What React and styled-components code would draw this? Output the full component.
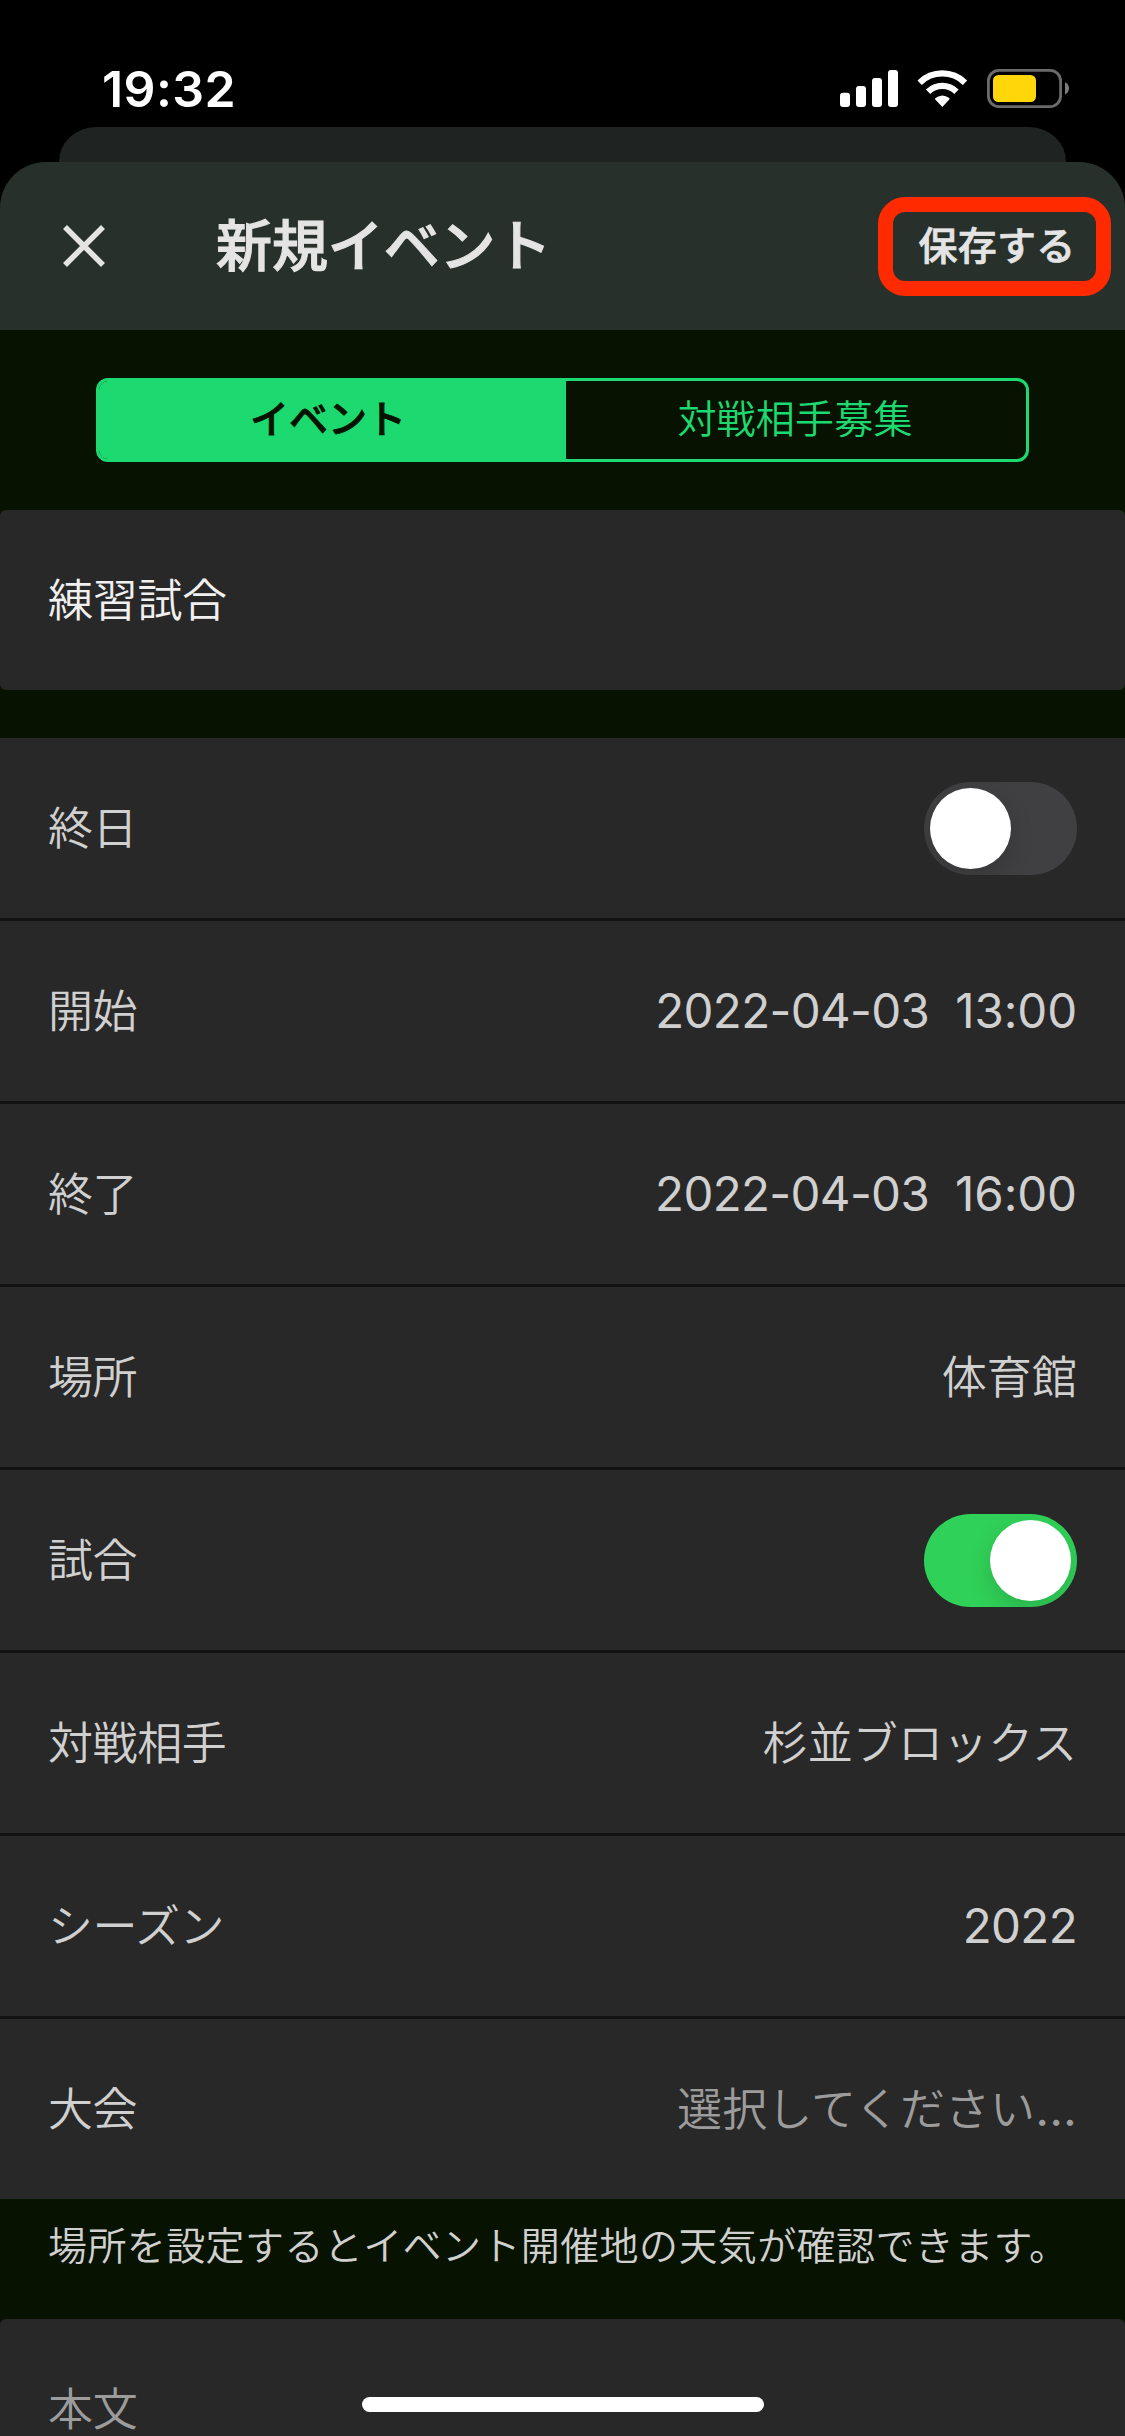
import React, { useState } from "react";
import styled, { createGlobalStyle } from "styled-components";

const GlobalStyle = createGlobalStyle`
  *, *::before, *::after { box-sizing: border-box; }
  body { margin: 0; background: #000; }
  button { font: inherit; border: 0; background: none; padding: 0; margin: 0; }
`;

const Screen = styled.div`
  width: 1125px;
  height: 2436px;
  overflow: hidden;
  position: relative;
  background: #000;
  color: #d0d0d0;
  font-family: Inter, "Noto Sans CJK JP", sans-serif;
  font-weight: 350;
  line-height: 1;
  white-space: nowrap;
  display: flex;
  flex-direction: column;
`;

const StatusBar = styled.div`
  height: 127px;
  flex: none;
  display: flex;
  justify-content: space-between;
  align-items: flex-start;
  padding: 64px 56px 0 102px;
`;

const Clock = styled.div`
  font-size: 50px;
  font-weight: 600;
  letter-spacing: 0.4px;
  color: #fff;
`;

const StatusIcons = styled.svg`
  width: 229px;
  height: 39px;
  margin-top: 5px;
`;

const BackSheet = styled.div`
  flex: none;
  height: 35px;
  margin: 0 59px;
  border-radius: 42px 42px 0 0 / 40px 40px 0 0;
  background: #1f2422;
`;

const Sheet = styled.div`
  flex: 1;
  display: flex;
  flex-direction: column;
  background: #071200;
  border-radius: 46px 46px 0 0;
  overflow: hidden;
`;

const Header = styled.header`
  height: 168px;
  flex: none;
  display: flex;
  align-items: center;
  background: #28302b;
  color: #e4e4e4;
  padding: 0 14px 0 63px;
`;

const CloseButton = styled.button`
  width: 42px;
  height: 42px;
  display: flex;
  color: inherit;
`;

const Title = styled.h1`
  margin: 0 auto 0 111px;
  font-size: 56px;
  font-weight: 500;
  -webkit-text-stroke: 1.1px currentColor;
  letter-spacing: -0.1px;
  line-height: 1;
`;

const SaveButton = styled.button`
  width: 233px;
  height: 99px;
  border: 15px solid #ff2a00;
  border-radius: 27px;
  color: inherit;
  font-size: 39px;
  font-weight: 500;
  -webkit-text-stroke: 0.7px currentColor;
  letter-spacing: 0.3px;
  line-height: 1;
  padding: 0 0 2px 5px;
`;

const Tabs = styled.div`
  flex: none;
  margin: 48px 96px;
  height: 84px;
  display: flex;
  border: 3px solid #1cda6f;
  border-radius: 12px;
  overflow: hidden;
`;

const Tab = styled.button`
  width: ${(p) => (p.$active ? "467px" : "460px")};
  padding: 0 ${(p) => (p.$active ? "9px" : "2px")} 3px 0;
  background: ${(p) => (p.$active ? "#1cda6f" : "transparent")};
  color: ${(p) => (p.$active ? "#071200" : "#1cda6f")};
  font-size: 39px;
  font-weight: ${(p) => (p.$active ? 500 : 350)};
  -webkit-text-stroke: ${(p) => (p.$active ? "0.8px" : "0")} currentColor;
  letter-spacing: ${(p) => (p.$active ? "0" : "0.2px")};
  line-height: 1;
`;

const Card = styled.div`
  flex: none;
  height: 180px;
  display: flex;
  align-items: center;
  padding: 0 48px;
  border-radius: 6px;
  background: #282828;
  font-size: 45px;
  letter-spacing: -0.3px;
  color: ${(p) => (p.$placeholder ? "#9c9c9c" : "#f0f0f0")};
`;

const Section = styled.div`
  flex: none;
  margin-top: 48px;
  display: flex;
  flex-direction: column;
  gap: 3px;
  background: #121212;
`;

const Row = styled.div`
  height: 180px;
  display: flex;
  align-items: center;
  justify-content: space-between;
  padding: 0 48px;
  background: #282828;
  font-size: 45px;
  letter-spacing: -0.4px;
`;

const Value = styled.span`
  letter-spacing: 0.1px;
  color: ${(p) => (p.$placeholder ? "#9c9c9c" : "inherit")};
`;

const Ellipsis = styled.span`
  font-size: 48px;
  font-weight: 400;
  line-height: 0;
`;

const NumericValue = styled.span`
  display: flex;
  gap: 26px;
  font-size: 47.5px;
  font-weight: 400;
`;

const Digits = styled.span`
  letter-spacing: ${(p) => p.$tracking}px;
`;

const Track = styled.button`
  width: 153px;
  height: 93px;
  border-radius: 47px;
  padding: 6px;
  display: flex;
  overflow: hidden;
  justify-content: ${(p) => (p.$on ? "flex-end" : "flex-start")};
  background: ${(p) => (p.$on ? "#30d158" : "#403f41")};
`;

const Knob = styled.span`
  width: 81px;
  height: 81px;
  border-radius: 50%;
  background: #fff;
  box-shadow: 0 9px 24px rgba(0, 0, 0, 0.15);
`;

const Note = styled.p`
  flex: none;
  height: 120px;
  margin: 0;
  padding: 27px 48px 0;
  font-size: 39px;
  letter-spacing: 0.4px;
  line-height: 1;
`;

const HomeIndicator = styled.div`
  position: absolute;
  left: 362px;
  bottom: 24px;
  width: 402px;
  height: 15px;
  border-radius: 8px;
  background: #fff;
`;

function Toggle({ initial }) {
  const [on, setOn] = useState(initial);
  return (
    <Track $on={on} role="switch" aria-checked={on} onClick={() => setOn(!on)}>
      <Knob />
    </Track>
  );
}

function StatusGlyphs() {
  return (
    <StatusIcons viewBox="0 0 229 39">
      <g fill="#fff">
        <rect x="0" y="23.7" width="10" height="14.3" rx="3" />
        <rect x="16" y="17" width="10" height="21" rx="3" />
        <rect x="32" y="9" width="10" height="29" rx="3" />
        <rect x="48" y="1" width="10" height="37" rx="3" />
        <path d="M102.3 38 L95.3 30.6 Q94.6 29.8 95.5 29.1 Q102.3 24.1 109.2 29.1 Q110 29.8 109.3 30.6 Z" />
      </g>
      <g fill="none" stroke="#fff" strokeWidth="6.2">
        <path d="M79.6 13.7 A32.5 32.5 0 0 1 125 13.7" />
        <path d="M88.1 22.7 A20.4 20.4 0 0 1 116.5 22.7" />
      </g>
      <rect x="148.4" y="1.4" width="72.2" height="36.2" rx="10.5" fill="none" stroke="#6b6b6b" strokeWidth="2.8" />
      <rect x="153" y="6" width="43" height="27" rx="5.5" fill="#ffd60a" />
      <path d="M225 13.2 Q229 15 229 19.3 Q229 23.6 225 25.6 Z" fill="#7b7b7b" />
    </StatusIcons>
  );
}

const rows = [
  { label: "終日", toggle: false },
  { label: "開始", date: "2022-04-03", time: "13:00" },
  { label: "終了", date: "2022-04-03", time: "16:00" },
  { label: "場所", value: "体育館" },
  { label: "試合", toggle: true },
  { label: "対戦相手", value: "杉並ブロックス" },
  { label: "シーズン", date: "2022" },
  { label: "大会", value: "選択してください", placeholder: true },
];

export default function App() {
  return (
    <Screen lang="ja">
      <GlobalStyle />
      <StatusBar>
        <Clock>19:32</Clock>
        <StatusGlyphs />
      </StatusBar>
      <BackSheet />
      <Sheet>
        <Header>
          <CloseButton aria-label="閉じる">
            <svg width="42" height="42" viewBox="0 0 42 42" fill="none" stroke="currentColor" strokeWidth="5.6">
              <path d="M2 2 L40 40 M40 2 L2 40" />
            </svg>
          </CloseButton>
          <Title>新規イベント</Title>
          <SaveButton>保存する</SaveButton>
        </Header>
        <Tabs>
          <Tab $active>イベント</Tab>
          <Tab>対戦相手募集</Tab>
        </Tabs>
        <Card>練習試合</Card>
        <Section>
          {rows.map((row) => (
            <Row key={row.label}>
              <span>{row.label}</span>
              {row.toggle !== undefined && <Toggle initial={row.toggle} />}
              {row.date && (
                <NumericValue>
                  <Digits $tracking={-0.65}>{row.date}</Digits>
                  {row.time && <Digits $tracking={-0.1}>{row.time}</Digits>}
                </NumericValue>
              )}
              {row.value && (
                <Value $placeholder={row.placeholder}>
                  {row.value}
                  {row.placeholder && <Ellipsis>...</Ellipsis>}
                </Value>
              )}
            </Row>
          ))}
        </Section>
        <Note>場所を設定するとイベント開催地の天気が確認できます。</Note>
        <Card $placeholder>本文</Card>
      </Sheet>
      <HomeIndicator />
    </Screen>
  );
}
